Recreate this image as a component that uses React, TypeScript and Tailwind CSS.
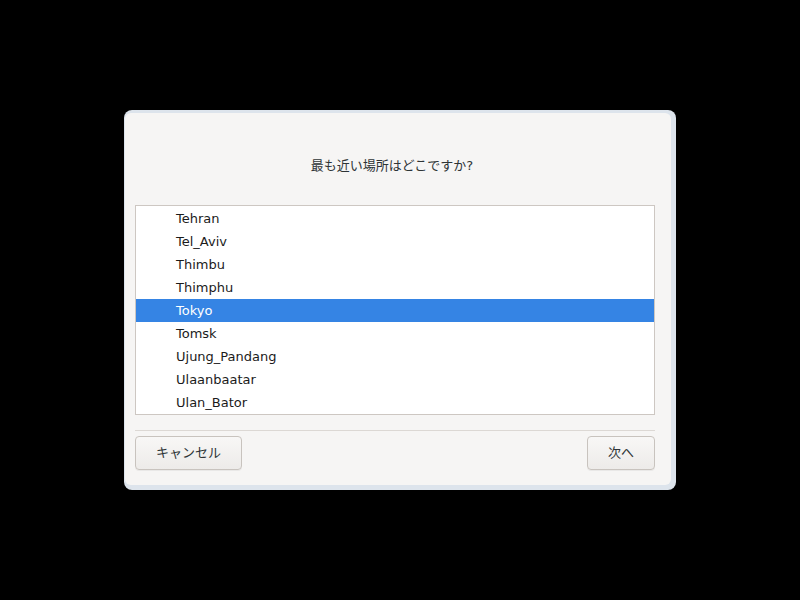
const zones = [
  "Tehran",
  "Tel_Aviv",
  "Thimbu",
  "Thimphu",
  "Tokyo",
  "Tomsk",
  "Ujung_Pandang",
  "Ulaanbaatar",
  "Ulan_Bator",
];

const font = { fontFamily: '"DejaVu Sans", "Noto Sans CJK JP", sans-serif' };

export default function App() {
  const selected = "Tokyo";

  return (
    <div className="w-[800px] h-[600px] bg-black flex items-center justify-center" style={font}>
      <div className="w-[552px] h-[380px] rounded-[8px] bg-[#dde4ec] pt-[3px] pl-[1px] pr-[5px] pb-[5px]">
        <div className="w-full h-full rounded-[6px] bg-[#f6f5f4] flex flex-col pl-[10px] pr-[16px]">
          <div className="mt-[43px] h-[20px] flex items-center justify-center pr-[6px] text-[13px] text-[#2e3436]">
            最も近い場所はどこですか?
          </div>

          {/* zone list */}
          <div className="mt-[29px] h-[210px] border border-[#cdc7c2] bg-white overflow-hidden">
            <div className="pt-px">
              {zones.map(z => (
                <div
                  key={z}
                  className={
                    z === selected
                      ? "h-[23px] flex items-center pl-[40px] text-[13px] bg-[#3584e4] text-white"
                      : "h-[23px] flex items-center pl-[40px] text-[13px] text-[#1b1b1b]"
                  }
                >
                  {z}
                </div>
              ))}
            </div>
          </div>

          <div className="mt-[15px] h-px bg-[#dcd8d4]" />

          <div className="mt-[5px] flex justify-between">
            <button className="w-[107px] h-[34px] rounded-[4px] border border-[#c8c3be] bg-gradient-to-b from-[#f8f7f6] to-[#edebe9] text-[13px] text-[#2e3436] shadow-[0_1px_0_rgba(0,0,0,0.05)]">
              キャンセル
            </button>
            <button className="w-[68px] h-[34px] rounded-[4px] border border-[#c8c3be] bg-gradient-to-b from-[#f8f7f6] to-[#edebe9] text-[13px] text-[#2e3436] shadow-[0_1px_0_rgba(0,0,0,0.05)]">
              次へ
            </button>
          </div>
        </div>
      </div>
    </div>
  );
}
